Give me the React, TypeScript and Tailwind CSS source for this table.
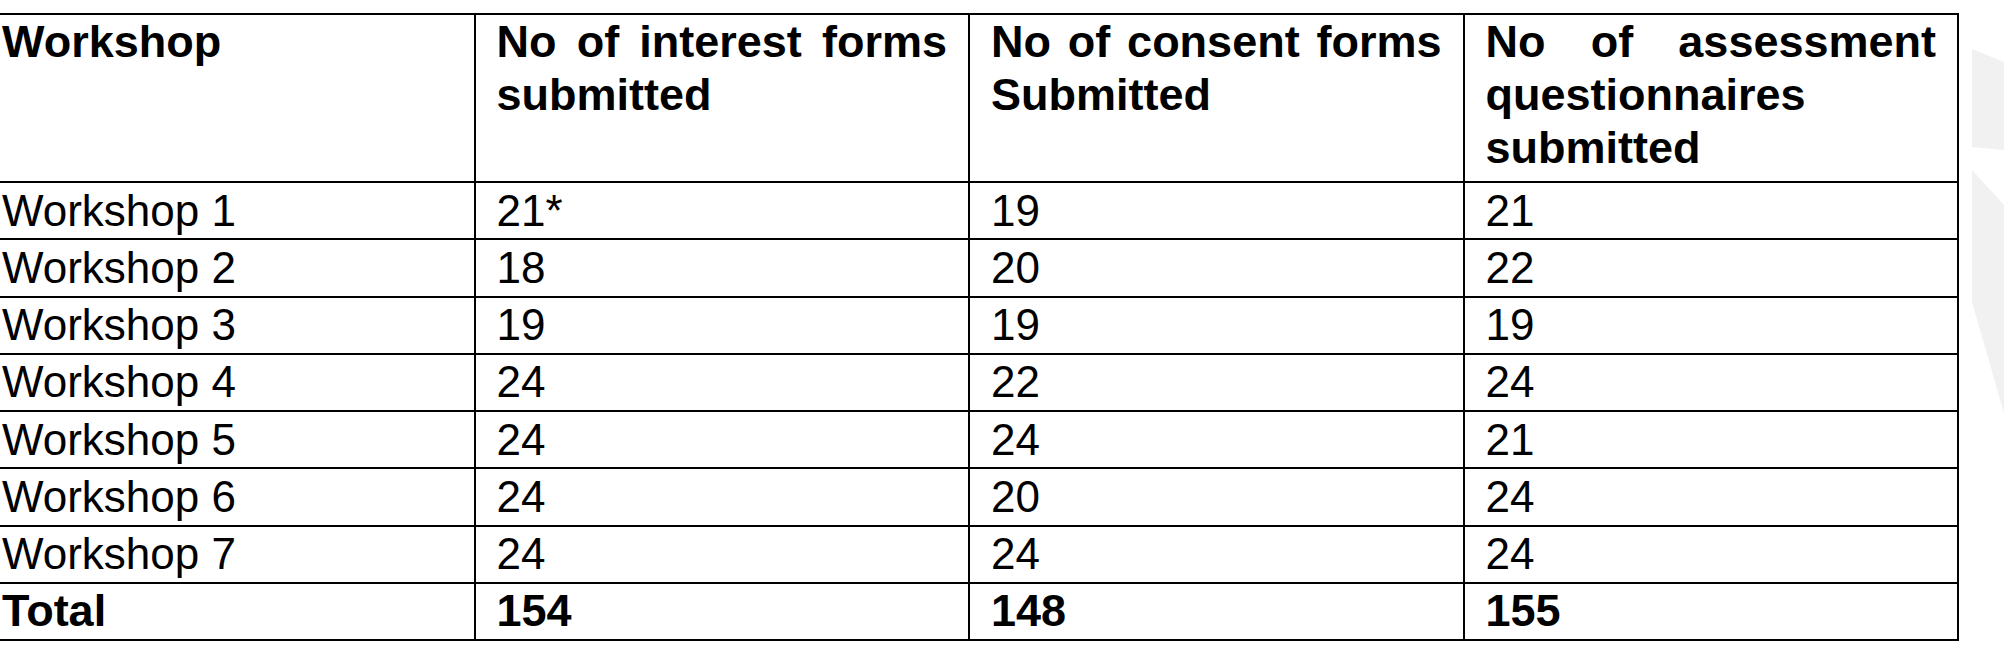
const headers = [
  "Workshop",
  "No of interest forms submitted",
  "No of consent forms Submitted",
  "No of assessment questionnaires submitted",
];

const rows = [
  ["Workshop 1", "21*", "19", "21"],
  ["Workshop 2", "18", "20", "22"],
  ["Workshop 3", "19", "19", "19"],
  ["Workshop 4", "24", "22", "24"],
  ["Workshop 5", "24", "24", "21"],
  ["Workshop 6", "24", "20", "24"],
  ["Workshop 7", "24", "24", "24"],
];

const totals = ["Total", "154", "148", "155"];

const Watermark = () => (
  <svg
    className="absolute top-0 left-[1960px] h-[649px] w-[44px]"
    viewBox="1960 0 44 649"
  >
    <polygon points="1972,49 2004,62 2004,150 1972,147" fill="#f1f1f1" />
    <polygon points="1972,170 2004,205 2004,413 1972,302" fill="#f1f1f1" />
  </svg>
);

export default function App() {
  return (
    <div className="relative h-[649px] w-full overflow-hidden bg-white text-black font-['Liberation_Sans',Arial,sans-serif]">
      <Watermark />
      <table className="relative mt-[13px] ml-[-21px] w-[1980px] table-fixed border-collapse">
        <thead>
          <tr>
            {headers.map((h) => (
              <th
                key={h}
                className="h-[168px] border-2 border-black px-[21px] pt-0 pb-0 align-top text-justify text-[45px] leading-[53px] font-bold"
              >
                {h}
              </th>
            ))}
          </tr>
        </thead>
        <tbody>
          {rows.map((row) => (
            <tr key={row[0]}>
              {row.map((cell, i) => (
                <td
                  key={i}
                  className="h-[57.25px] border-2 border-black px-[21px] py-0 align-middle text-[44px] leading-[50px]"
                >
                  {cell}
                </td>
              ))}
            </tr>
          ))}
          <tr>
            {totals.map((cell, i) => (
              <td
                key={i}
                className="h-[57.25px] border-2 border-black px-[21px] py-0 align-middle text-[45px] leading-[50px] font-bold"
              >
                {cell}
              </td>
            ))}
          </tr>
        </tbody>
      </table>
    </div>
  );
}
